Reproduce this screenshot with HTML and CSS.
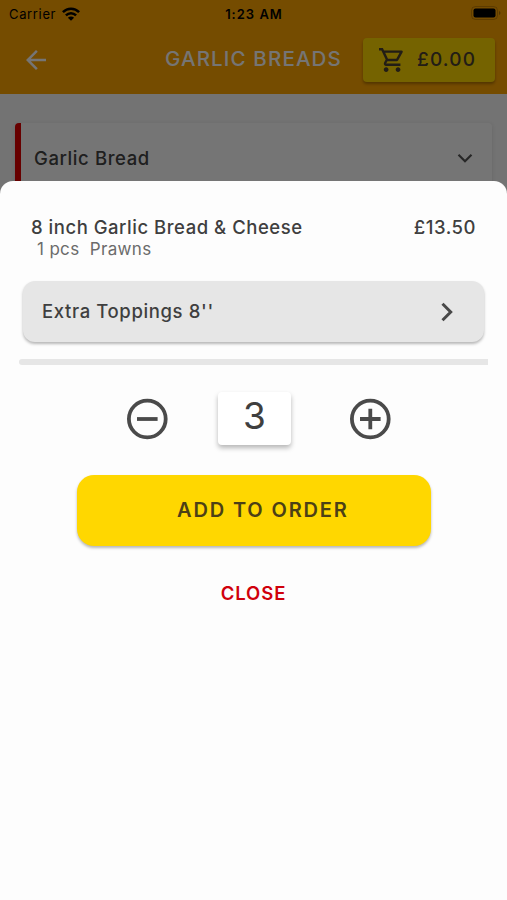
FILE: index.html
```html
<!DOCTYPE html>
<html lang="en">
<head>
<meta charset="utf-8">
<title>Garlic Breads</title>
<link rel="stylesheet" href="styles.css">
</head>
<body>
<div class="screen">
  <header class="header">
    <div class="status">
      <div class="status-left"><span class="carrier">Carrier</span>
        <svg class="wifi" viewBox="0 0 18 14" width="18" height="14" fill="none" stroke="#000" stroke-width="2.5"><path d="M.9 5.2C5.4.6 12.6.6 17.1 5.2"/><path d="M3.9 8.3c2.9-2.9 7.3-2.9 10.2 0"/><path d="M9 13.8 5.9 10.7c1.8-1.6 4.4-1.6 6.2 0z" fill="#000" stroke="none"/></svg>
      </div>
      <span class="clock">1:23 AM</span>
      <svg class="battery" viewBox="0 0 31 15" width="31" height="15"><rect x=".5" y=".5" width="26" height="13" rx="4" fill="none" stroke="#000" stroke-opacity=".2"/><rect x="2.500" y="2.500" width="22" height="9" rx="2" fill="#000"/><path d="M28 5v4c2-.8 2-3.200 0-4z" fill="#000" fill-opacity=".3"/></svg>
    </div>
    <div class="appbar">
      <svg class="back" viewBox="4 4 16 16" width="20" height="20" fill="#fff"><path d="M20 11H7.830l5.590-5.590L12 4l-8 8 8 8 1.410-1.410L7.830 13H20v-2z"/></svg>
      <h1 class="title">GARLIC BREADS</h1>
      <div class="cart">
        <svg viewBox="1 2 21 20" width="25" height="24" fill="#4a3f30"><path d="M15.550 13c.75 0 1.410-.41 1.750-1.030l3.580-6.490c.37-.66-.11-1.480-.87-1.480H5.210l-.94-2H1v2h2l3.600 7.590-1.350 2.440C4.520 15.370 5.480 17 7 17h12v-2H7l1.100-2h7.450zM6.160 6h12.150l-2.760 5H8.530L6.160 6zM7 18c-1.100 0-1.990.9-1.990 2S5.900 22 7 22s2-.9 2-2-.9-2-2-2zm10 0c-1.100 0-1.990.9-1.990 2s.89 2 1.990 2 2-.9 2-2-.9-2-2-2z"/></svg>
        <span class="total">£0.00</span>
      </div>
    </div>
  </header>
  <main class="menu">
    <div class="category"><span class="cat-name">Garlic Bread</span>
      <svg viewBox="0 0 16 10" width="16" height="10" fill="none" stroke="#555" stroke-width="2.2"><path d="M1.500 1.800 8 8.300l6.500-6.500"/></svg>
    </div>
  </main>
  <div class="scrim"></div>
  <section class="sheet">
    <div class="item"><span class="item-name">8 inch Garlic Bread &amp; Cheese</span><span class="price">£13.50</span></div>
    <div class="detail">1 pcs&nbsp; Prawns</div>
    <div class="extras"><span class="extras-name">Extra Toppings 8''</span>
      <svg viewBox="0 0 12 20" width="12" height="20" fill="none" stroke="#484848" stroke-width="3"><path d="M1.500 1.800 9.700 10l-8.200 8.200"/></svg>
    </div>
    <div class="rule"></div>
    <div class="quantity">
      <svg viewBox="0 0 42 42" width="42" height="42" fill="none" stroke="#4a4a4a" stroke-width="3.800"><circle cx="21.300" cy="21" r="18.400"/><path d="M11 21h20.600"/></svg>
      <div class="count"><span>3</span></div>
      <svg viewBox="0 0 42 42" width="42" height="42" fill="none" stroke="#4a4a4a" stroke-width="3.800"><circle cx="21.300" cy="21" r="18.400"/><path d="M11 21h20.600M21.300 10.700v20.600"/></svg>
    </div>
    <div class="add"><span>ADD TO ORDER</span></div>
    <div class="close"><span>CLOSE</span></div>
  </section>
</div>
</body>
</html>
```
FILE: styles.css
```css
* { box-sizing: border-box; }
body { margin: 0; font-family: Inter, "Liberation Sans", sans-serif; }
svg { display: block; flex: none; }
span { white-space: nowrap; }
.screen { position: relative; height: 900px; overflow: hidden; background: #fafafa; display: flex; flex-direction: column; }
.header { height: 94px; background: #ffa500; }
.status { height: 27px; display: grid; grid-template-columns: 1fr auto 1fr; align-items: center; padding: 0 5px 0 9px; color: #000; }
.status-left { display: flex; align-items: center; gap: 6px; }
.carrier { font-size: 13px; letter-spacing: .65px; }
.clock { font-size: 13px; font-weight: 600; letter-spacing: 1px; margin-right: 3px; }
.battery { justify-self: end; }
.appbar { height: 65px; display: flex; align-items: center; padding: 0 12px 0 26px; }
.title { margin: 0 0 0 119px; width: 198px; font-size: 20.500px; line-height: 24px; font-weight: 500; letter-spacing: 1.150px; padding-bottom: 1px; color: #fff; white-space: nowrap; }
.cart { flex: 1; height: 44px; display: flex; align-items: center; gap: 13px; padding-left: 16px; border-radius: 4px; background: #ffd700; color: #4a3f30; box-shadow: 0 2px 3px rgba(0,0,0,.3); }
.total { font-size: 19px; font-weight: 450; letter-spacing: 1.150px; }
.menu { padding: 29px 15px 0; }
.category { height: 70px; display: flex; align-items: center; justify-content: space-between; padding: 0 19px 0 13px; border-left: 6px solid #e00000; border-radius: 4px; background: #fff; box-shadow: 0 1px 4px rgba(0,0,0,.12); color: #444; }
.cat-name { font-size: 18.500px; font-weight: 500; letter-spacing: .6px; }
.scrim { position: absolute; inset: 0; background: rgba(0,0,0,.54); }
.sheet { position: absolute; inset: 181px 0 0; background: #fdfdfd; border-radius: 13px 13px 0 0; padding: 34px 19px 0; color: #3f3f3f; }
.item { display: flex; justify-content: space-between; line-height: 24px; padding: 0 12px; font-size: 18.500px; font-weight: 450; letter-spacing: .52px; }
.detail { padding-left: 18px; font-size: 17px; line-height: 20px; letter-spacing: .34px; color: #6b6b6b; }
.extras { height: 61px; margin: 22px 4px 0; display: flex; align-items: center; justify-content: space-between; padding: 0 31px 0 19px; border-radius: 12px; background: #e6e6e6; box-shadow: 0 2px 3px rgba(0,0,0,.28); font-size: 18.500px; font-weight: 450; letter-spacing: .62px; line-height: 24px; }
.extras-name { padding-bottom: 1px; }
.rule { height: 6px; margin-top: 17px; border-radius: 3px 0 0 3px; background: #e6e6e6; }
.quantity { display: flex; align-items: center; height: 54px; margin: 26px 97px 0 107px; }
.quantity svg { margin-top: 2px; }
.count { width: 73px; height: 53px; margin: 0 58px 0 50px; display: flex; justify-content: center; border-radius: 4px; background: #fff; box-shadow: 0 3px 5px rgba(0,0,0,.28); font-size: 37px; line-height: 48px; font-weight: 400; }
.add { height: 71px; width: 354px; margin: 30px 0 0 58px; padding-left: 101px; border-radius: 17px; background: #ffd700; box-shadow: 0 2px 3px rgba(0,0,0,.28); color: #4c4016; font-size: 20px; font-weight: 600; line-height: 70px; letter-spacing: 1.850px; }
.add span { margin-left: -1px; }
.close { margin-top: 35px; text-align: center; color: #d0000b; font-size: 18.500px; font-weight: 600; line-height: 24px; letter-spacing: .9px; }
```
